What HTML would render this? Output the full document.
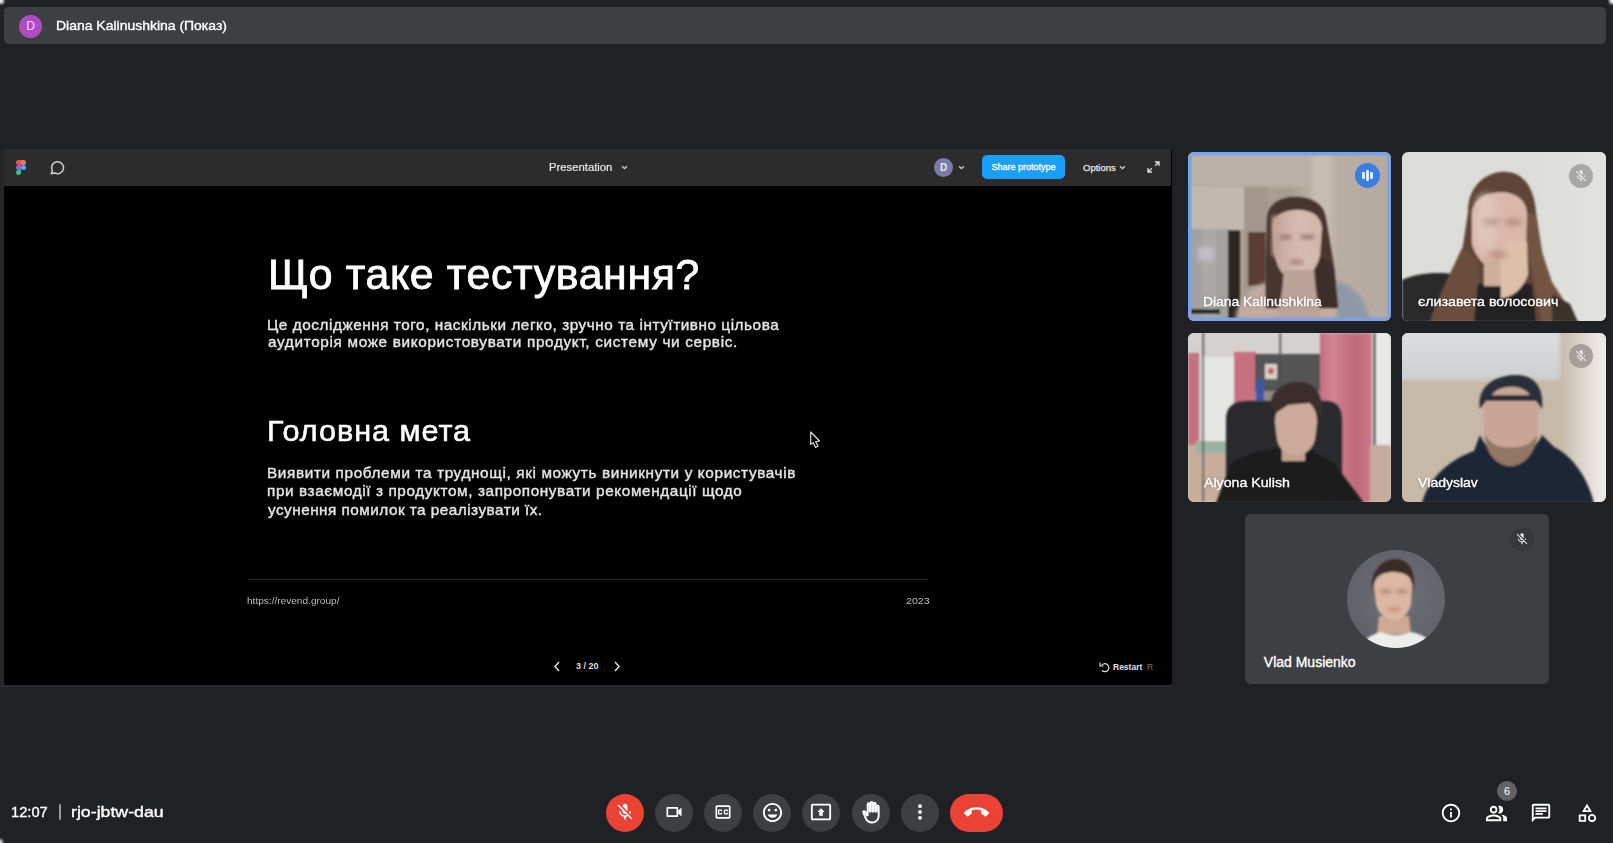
<!DOCTYPE html>
<html><head><meta charset="utf-8">
<style>
*{margin:0;padding:0;box-sizing:border-box}
html,body{width:1613px;height:843px;overflow:hidden;background:#202124;font-family:"Liberation Sans",sans-serif;position:relative}
.a{position:absolute}
svg{position:absolute;overflow:visible}
#topbar{left:4px;top:7px;width:1602px;height:37px;background:#3c4043;border-radius:5px}
#av{left:19px;top:15px;width:23px;height:23px;border-radius:50%;background:#b04bc6;color:#f6dcff;font-size:12px;text-align:center;line-height:23px}
#ttl{left:57px;top:17px;font-size:13px;letter-spacing:0.52px;color:#fff;white-space:nowrap}
#panel{left:4px;top:149px;width:1168px;height:536px;background:#000;border-radius:3px;overflow:hidden}
#tb{left:0;top:0;width:1167px;height:37px;background:#2c2c2c}
#h1{left:268px;top:251px;font-size:41px;letter-spacing:1.67px;white-space:nowrap;color:#fff}
#p1{left:267px;top:315px;font-size:14px;line-height:18.5px;color:#e6e6e6;white-space:nowrap}
#h2{left:267px;top:414px;font-size:29px;letter-spacing:2px;white-space:nowrap;color:#fff}
#p2{left:267px;top:465px;font-size:14px;line-height:18.5px;color:#e6e6e6;white-space:nowrap}
#hr{left:248px;top:579px;width:680px;height:1px;background:#262626}
.sl{position:absolute;line-height:1;white-space:nowrap;transform-origin:0 0}
.tx{color:#fff;-webkit-text-stroke:0.35px #fff}
.tn{text-shadow:0 0 3px rgba(0,0,0,.45)}
.sp{font-size:15px;color:#e4e4e4;-webkit-text-stroke:0.4px #e4e4e4}
.ft{font-size:9px;color:#bdbdbd;white-space:nowrap}
.tile{position:absolute;border-radius:6px;overflow:hidden}
.nm{position:absolute;font-size:13px;color:#fff;white-space:nowrap;text-shadow:0 0 2px rgba(0,0,0,.35)}
.btn{position:absolute;top:793.5px;width:38px;height:38px;border-radius:50%;background:#3c4043}
.b{position:absolute}
</style></head><body>
<div id="topbar" class="a"></div>
<div id="av" class="a">D</div>
<div class="sl tx" style="left:56px;top:18.5px;font-size:13px;transform:scaleX(1.074)">Diana Kalinushkina (Показ)</div>

<div class="a" style="left:0;top:150px;width:4px;height:536px;background:#252629"></div>
<div class="a" style="left:0;top:685px;width:1172px;height:1.5px;background:#2b2c2f"></div>
<div id="panel" class="a">
  <div id="tb" class="a"></div>
</div>

<!-- toolbar icons -->
<svg style="left:16px;top:160px" width="10" height="15" viewBox="0 0 10 15">
  <path d="M0 2.5A2.5 2.5 0 0 1 2.5 0H5v5H2.5A2.5 2.5 0 0 1 0 2.5z" fill="#e2584a"/>
  <path d="M5 0h2.5a2.5 2.5 0 0 1 0 5H5z" fill="#ec7070"/>
  <path d="M0 7.5A2.5 2.5 0 0 1 2.5 5H5v5H2.5A2.5 2.5 0 0 1 0 7.5z" fill="#9a5ce0"/>
  <circle cx="7.5" cy="7.5" r="2.5" fill="#44b4ec"/>
  <path d="M0 12.5A2.5 2.5 0 0 1 2.5 10H5v2.5a2.5 2.5 0 0 1-5 0z" fill="#34c486"/>
</svg>
<svg style="left:50px;top:160px" width="15" height="15" viewBox="0 0 15 15">
  <path d="M1.2 13.8l1.2-3.1A6 6 0 1 1 4.6 12.9z" fill="none" stroke="#cfcfcf" stroke-width="1.5" stroke-linejoin="round"/>
</svg>
<div class="a" style="left:549px;top:161px;font-size:11px;color:#e8e8e8;white-space:nowrap;transform:scaleX(1.026);transform-origin:0 0;-webkit-text-stroke:0.2px #e8e8e8">Presentation</div>
<svg style="left:621px;top:165px" width="7" height="5" viewBox="0 0 7 5"><path d="M1 1.2l2.5 2.3L6 1.2" fill="none" stroke="#c8c8c8" stroke-width="1.4"/></svg>
<div class="a" style="left:934px;top:158px;width:19px;height:19px;border-radius:50%;background:#7c7aa8;color:#e8e8f4;font-size:10px;line-height:19px;text-align:center;font-weight:bold">D</div>
<svg style="left:958px;top:165px" width="7" height="5" viewBox="0 0 7 5"><path d="M1 1.2l2.5 2.3L6 1.2" fill="none" stroke="#c8c8c8" stroke-width="1.4"/></svg>
<div class="a" style="left:982px;top:155px;width:83px;height:24px;border-radius:5px;background:#18a0fb;color:#fff;font-size:9px;line-height:24px;text-align:center;white-space:nowrap;-webkit-text-stroke:0.3px #fff">Share prototype</div>
<div class="a" style="left:1083px;top:162px;font-size:9.5px;color:#e8e8e8;white-space:nowrap;-webkit-text-stroke:0.25px #e8e8e8">Options</div>
<svg style="left:1119px;top:165px" width="7" height="5" viewBox="0 0 7 5"><path d="M1 1.2l2.5 2.3L6 1.2" fill="none" stroke="#c8c8c8" stroke-width="1.4"/></svg>
<svg style="left:1147px;top:161px" width="13" height="12" viewBox="0 0 13 12">
  <path d="M8 1h4v4M12 1L8.2 4.8M5 11H1V7M1 11l3.8-3.8" fill="none" stroke="#ddd" stroke-width="1.3"/>
</svg>

<div class="sl" style="left:267.5px;top:253.9px;font-size:42px;transform:scaleX(1.02);letter-spacing:0.608px;color:#fff;-webkit-text-stroke:0.8px #fff">Що таке тестування?</div>
<div class="sl sp" style="left:267px;top:316.5px;transform:scaleX(1.02);letter-spacing:0.541px">Це дослідження того, наскільки легко, зручно та інтуїтивно цільова</div>
<div class="sl sp" style="left:268px;top:334.3px;transform:scaleX(1.02);letter-spacing:0.66px">аудиторія може використовувати продукт, систему чи сервіс.</div>
<div class="sl" style="left:266.7px;top:415.7px;font-size:30px;transform:scaleX(1.02);letter-spacing:0.943px;color:#fff;-webkit-text-stroke:0.55px #fff">Головна мета</div>
<div class="sl sp" style="left:267px;top:465.2px;transform:scaleX(1.02);letter-spacing:0.625px">Виявити проблеми та труднощі, які можуть виникнути у користувачів</div>
<div class="sl sp" style="left:267px;top:483.1px;transform:scaleX(1.02);letter-spacing:0.598px">при взаємодії з продуктом, запропонувати рекомендації щодо</div>
<div class="sl sp" style="left:268px;top:501.5px;transform:scaleX(1.02);letter-spacing:0.473px">усунення помилок та реалізувати їх.</div>
<div id="hr" class="a"></div>
<div class="a ft" style="left:246.5px;top:596px;transform:scaleX(1.12);transform-origin:0 0">https://revend.group/</div>
<div class="a ft" style="left:905.5px;top:596px;transform:scaleX(1.18);transform-origin:0 0">2023</div>

<svg style="left:553px;top:661px" width="8" height="11" viewBox="0 0 8 11"><path d="M6 1L2 5.5 6 10" fill="none" stroke="#ddd" stroke-width="1.5"/></svg>
<div class="a ft" style="left:576px;top:661px;color:#ddd;font-weight:bold">3 / 20</div>
<svg style="left:613px;top:661px" width="8" height="11" viewBox="0 0 8 11"><path d="M2 1l4 4.5L2 10" fill="none" stroke="#ddd" stroke-width="1.5"/></svg>

<svg style="left:1099px;top:661px" width="11" height="12" viewBox="0 0 11 12">
  <path d="M2.5 4.5A4 4 0 1 1 3 9.5" fill="none" stroke="#ddd" stroke-width="1.2"/>
  <path d="M1 1.5v3.5h3.5" fill="none" stroke="#ddd" stroke-width="1.2"/>
</svg>
<div class="a" style="left:1113px;top:662px;font-size:8.5px;font-weight:bold;color:#e0e0e0;white-space:nowrap">Restart</div>
<div class="a" style="left:1147px;top:662px;font-size:8.5px;color:#777;white-space:nowrap">R</div>

<!-- cursor -->
<svg style="left:809px;top:430px" width="14" height="20" viewBox="0 0 14 20">
  <path d="M1.7 2v12.4l2.3-1.8 2.7 5 2.3-1.6-2.4-4.2 3.9-.8z" fill="#000" stroke="#e8e8e8" stroke-width="1.1" stroke-linejoin="round"/>
</svg>

<!-- tiles -->
<svg style="left:0;top:0" width="0" height="0"><defs>
<filter id="b1" x="-20%" y="-20%" width="140%" height="140%"><feGaussianBlur stdDeviation="1.2"/></filter>
<filter id="b2" x="-20%" y="-20%" width="140%" height="140%"><feGaussianBlur stdDeviation="2"/></filter>
<filter id="b3" x="-20%" y="-20%" width="140%" height="140%"><feGaussianBlur stdDeviation="3"/></filter>
<clipPath id="c1"><rect x="0" y="0" width="203" height="169" rx="6"/></clipPath>
<clipPath id="c2"><rect x="0" y="0" width="204" height="169" rx="6"/></clipPath>
<linearGradient id="g1" x1="0" x2="1" y1="0" y2="0"><stop offset="0" stop-color="#b9b1a8"/><stop offset=".28" stop-color="#aca197"/><stop offset=".5" stop-color="#a89c91"/><stop offset=".6" stop-color="#b8ada2"/><stop offset=".67" stop-color="#c6bbb0"/><stop offset=".74" stop-color="#b9aea3"/><stop offset="1" stop-color="#b4aa9f"/></linearGradient>
<linearGradient id="g4c" x1="0" x2="0" y1="0" y2="1"><stop offset="0" stop-color="#dde0e2"/><stop offset="1" stop-color="#cdd0d0"/></linearGradient>
<linearGradient id="g4r" x1="0" x2="1" y1="0" y2="0"><stop offset="0" stop-color="#c4b8a8"/><stop offset=".35" stop-color="#d8d0c6"/><stop offset=".8" stop-color="#ebe8e3"/><stop offset="1" stop-color="#efece8"/></linearGradient>
<linearGradient id="g3c" x1="0" x2="1" y1="0" y2="0"><stop offset="0" stop-color="#c46e7e"/><stop offset=".25" stop-color="#d28696"/><stop offset=".45" stop-color="#c87686"/><stop offset=".7" stop-color="#c06a7a"/><stop offset="1" stop-color="#ca7888"/></linearGradient>
<linearGradient id="gf1" x1="0" x2="1" y1="0" y2="0"><stop offset="0" stop-color="#c6a89c"/><stop offset=".55" stop-color="#d8bcb1"/><stop offset="1" stop-color="#d4b6aa"/></linearGradient>
<linearGradient id="g2b" x1="0" x2="1" y1="0" y2="0"><stop offset="0" stop-color="#dcddd9"/><stop offset="1" stop-color="#e2e3df"/></linearGradient>
<radialGradient id="gv" cx=".55" cy=".45" r=".6"><stop offset="0" stop-color="#6e6f76"/><stop offset="1" stop-color="#606168"/></radialGradient>
</defs></svg>

<!-- tile 1: Diana -->
<svg style="left:1188px;top:152px" width="203" height="169" viewBox="0 0 203 169">
 <g clip-path="url(#c1)">
  <rect width="203" height="169" fill="url(#g1)"/>
  <g filter="url(#b2)">
   <rect x="-5" y="-5" width="130" height="40" fill="#b9b1a8"/>
  </g>
  <g filter="url(#b1)">
   <rect x="3" y="35" width="54" height="43" fill="#c1b9af"/>
   <rect x="56" y="35" width="24" height="135" fill="#a4988e"/>
   <rect x="2" y="77" width="40" height="92" fill="#a3a2a1"/>
   <rect x="14" y="77" width="14" height="92" fill="#aaa9a8"/>
   <rect x="40" y="78" width="12" height="92" fill="#2e2824"/>
   <rect x="2" y="157" width="30" height="5" fill="#2a2a2a"/>
   <rect x="60" y="80" width="18" height="54" fill="#5a3e30"/>
  </g>
  <g filter="url(#b2)">
   <rect x="10" y="95" width="16" height="14" fill="#c0bcc8"/>
   <rect x="124" y="0" width="18" height="169" fill="#c8bdb1"/>
   <path d="M47 170C50 140 70 128 100 127L150 128C170 132 180 145 182 170Z" fill="#c2ab9e"/>
   <path d="M146 129C166 132 178 145 182 170L150 170Z" fill="#8e98a6"/>
  </g>
  <g filter="url(#b1)">
   <path d="M79 66C80 50 96 44 108 45C124 45 136 52 138 66L146 114L150 156L128 156L124 126L96 126L92 156L78 156L77 114Z" fill="#47352f"/>
   <path d="M128 100L146 114L150 156L130 156Z" fill="#3e2e29"/>
   <path d="M85 76C86 60 100 58 110 58C124 58 133 64 134 76L132 104C128 120 118 127 108 127C98 127 90 120 87 104Z" fill="url(#gf1)"/>
      <path d="M96 118L126 118L128 140L134 170L88 170L94 140Z" fill="#bba398"/>
  </g>
  <g filter="url(#b2)">
   <rect x="90" y="83" width="13" height="4" fill="#8f716a"/>
   <rect x="113" y="83" width="13" height="4" fill="#8f716a"/>
   <rect x="102" y="108" width="13" height="4" fill="#a27a72"/>
   <rect x="84" y="64" width="8" height="40" fill="#c4a59a"/>
  </g>
 </g>
 <rect x="1.75" y="1.75" width="199.5" height="165.5" rx="5" fill="none" stroke="#7ba2e6" stroke-width="3.5"/>
</svg>
<svg style="left:1355px;top:163px" width="25" height="25" viewBox="0 0 25 25"><circle cx="12.5" cy="12.5" r="12.5" fill="#3a7ee4"/><rect x="7.2" y="9" width="2.6" height="7" rx="1.3" fill="#fff"/><rect x="11.2" y="7" width="2.6" height="11" rx="1.3" fill="#fff"/><rect x="15.2" y="9" width="2.6" height="7" rx="1.3" fill="#fff"/></svg>

<!-- tile 2: Elizaveta -->
<svg style="left:1402px;top:152px" width="204" height="169" viewBox="0 0 204 169">
 <g clip-path="url(#c2)">
  <rect width="204" height="169" fill="#dcddd9"/>
  <rect x="120" width="84" height="169" fill="url(#g2b)"/>
  <g filter="url(#b1)">
   <path d="M66 60C66 28 92 18 104 20C120 20 132 34 134 60L140 100L148 130L176 170L26 170L50 128L60 100Z" fill="#5f4537"/>
   <path d="M120 60L134 62L140 100L150 130L176 170L140 170L128 110Z" fill="#725443"/>
   <path d="M60 100L68 110L62 170L26 170L50 128Z" fill="#6e5242"/>
   <path d="M0 128C16 120 48 118 64 126L60 170L0 170Z" fill="#2b2a29"/>
   <path d="M60 96L76 108L80 170L28 170C34 150 46 126 60 96Z" fill="#6a4d3c"/>
   <path d="M76 132L130 132L134 170L72 170Z" fill="#222120"/>
   <path d="M150 142L168 152L176 170L150 170Z" fill="#3a302a"/>
   <path d="M70 62C70 36 124 30 125 62L124 96C118 115 102 121 96 120C82 116 72 102 70 92Z" fill="#d9b8aa"/>
   <rect x="82" y="108" width="26" height="26" fill="#cfae9c"/>
   <path d="M99 146L98 102C100 90 110 86 125 90L126 122C122 136 110 146 99 146Z" fill="#dcc0aa"/>
  </g>
  <g filter="url(#b3)">
   <rect x="74" y="42" width="20" height="56" rx="10" fill="#dfc6b8"/>
   <rect x="82" y="68" width="15" height="4" fill="#9a7868"/>
   <rect x="104" y="68" width="15" height="4" fill="#9a7868"/>
   <rect x="88" y="100" width="16" height="5" fill="#b47c72"/>
  </g>
 </g>
</svg>
<svg style="left:1569px;top:164px" width="24" height="24" viewBox="0 0 24 24"><circle cx="12" cy="12" r="12" fill="#a8a8a6"/><g transform="translate(5 5) scale(0.58)" fill="#eee"><path d="M19 11h-1.7c0 .74-.16 1.43-.43 2.05l1.23 1.23c.56-.98.9-2.09.9-3.28zm-4.02.17c0-.06.02-.11.02-.17V5c0-1.66-1.34-3-3-3S9 3.34 9 5v.18l5.98 5.99zM4.27 3L3 4.27l6.01 6.01V11c0 1.66 1.33 3 2.99 3 .22 0 .44-.03.65-.08l1.66 1.66c-.71.33-1.5.52-2.31.52-2.76 0-5.3-2.1-5.3-5.1H5c0 3.41 2.72 6.23 6 6.72V21h2v-3.28c.91-.13 1.77-.45 2.54-.9L19.73 21 21 19.73 4.27 3z"/></g></svg>

<!-- tile 3: Alyona -->
<svg style="left:1188px;top:333px" width="203" height="169" viewBox="0 0 203 169">
 <g clip-path="url(#c1)">
  <rect width="203" height="169" fill="#d6d2ce"/>
  <rect width="203" height="22" fill="#d4d1ce"/>
  <g filter="url(#b1)">
   <rect x="0" y="20" width="11" height="92" fill="#c47282"/>
   <rect x="14" y="24" width="34" height="90" fill="#e6e6e4"/>
   <rect x="46" y="19" width="22" height="54" fill="#c67080"/>
   <rect x="67" y="21" width="66" height="40" fill="#545456"/>
   <rect x="67" y="58" width="66" height="14" fill="#8e8a86"/>
   <rect x="77" y="31" width="12" height="15" fill="#d8d0cc"/>
   <circle cx="83" cy="38" r="3" fill="#c85a50"/>
   <rect x="68" y="47" width="8" height="22" fill="#3a58a8"/>
   <rect x="132" y="0" width="52" height="169" fill="url(#g3c)"/>
   <rect x="184" y="0" width="19" height="115" fill="#e8e8e6"/>
   <rect x="185" y="0" width="3" height="115" fill="#606060"/>
   <rect x="182" y="112" width="21" height="57" fill="#c4ab9c"/>
   <rect x="0" y="112" width="40" height="57" fill="#c6ad9c"/>
   <rect x="8" y="108" width="32" height="12" fill="#9ab2a2"/>
   <rect x="14.5" y="0" width="1.6" height="169" fill="#505050"/>
   <rect x="91.5" y="0" width="1.6" height="60" fill="#505050"/>
  </g>
  <g filter="url(#b1)">
   <path d="M38 169L38 86C38 72 48 68 60 68L138 68C150 68 154 76 154 88L154 169Z" fill="#2c2c2e"/>
   <path d="M28 170L43 130L66 119L90 115L122 117L146 130L176 170Z" fill="#1e1e1f"/>
   <rect x="94" y="108" width="23" height="20" fill="#c0a090"/>
   <path d="M87 90C87 72 98 66 108 66C120 66 129 72 129 90L127 106C124 118 116 122 108 122C99 122 91 117 89 106Z" fill="#ccab9c"/>
   <path d="M83 70C84 54 100 48 112 49C128 50 135 60 134 84L128 78L122 70L100 72L88 80Z" fill="#3a2e2a"/>
  </g>
 </g>
</svg>

<!-- tile 4: Vladyslav -->
<svg style="left:1402px;top:333px" width="204" height="169" viewBox="0 0 204 169">
 <g clip-path="url(#c2)">
  <rect width="204" height="169" fill="#c6b9a7"/>
  <g filter="url(#b2)">
   <rect x="-5" y="-5" width="214" height="52" fill="url(#g4c)"/>
   <rect x="158" y="-5" width="50" height="180" fill="url(#g4r)"/>
  </g>
  <g filter="url(#b1)">
   <path d="M20 170C28 142 50 126 72 118L78 102C86 126 130 128 140 102L152 114C172 124 186 146 192 170Z" fill="#1f2534"/>
   <path d="M81 64L137 64L136 98C134 118 122 132 108 133C94 132 84 120 82 100Z" fill="#c9a595"/>
   <path d="M82 102C86 122 96 133 108 133C120 133 132 124 136 102L128 110C118 116 98 116 90 110Z" fill="#927666"/>
   <path d="M78 76C74 50 98 42 114 42C134 42 142 56 140 76L134 68L84 68Z" fill="#2a2e38"/>
   <path d="M90 62C96 52 120 50 128 62Z" fill="#c4a696"/>
  </g>
 </g>
</svg>
<svg style="left:1569px;top:344px" width="24" height="24" viewBox="0 0 24 24"><circle cx="12" cy="12" r="12" fill="#a09a92" fill-opacity=".9"/><g transform="translate(5 5) scale(0.58)" fill="#eee"><path d="M19 11h-1.7c0 .74-.16 1.43-.43 2.05l1.23 1.23c.56-.98.9-2.09.9-3.28zm-4.02.17c0-.06.02-.11.02-.17V5c0-1.66-1.34-3-3-3S9 3.34 9 5v.18l5.98 5.99zM4.27 3L3 4.27l6.01 6.01V11c0 1.66 1.33 3 2.99 3 .22 0 .44-.03.65-.08l1.66 1.66c-.71.33-1.5.52-2.31.52-2.76 0-5.3-2.1-5.3-5.1H5c0 3.41 2.72 6.23 6 6.72V21h2v-3.28c.91-.13 1.77-.45 2.54-.9L19.73 21 21 19.73 4.27 3z"/></g></svg>

<!-- tile 5: Vlad Musienko -->
<div class="tile" style="left:1245px;top:514px;width:304px;height:170px;background:#3c4043"></div>
<svg style="left:1347px;top:550px" width="98" height="98" viewBox="0 0 98 98">
 <defs><clipPath id="cv"><circle cx="49" cy="49" r="49"/></clipPath></defs>
 <g clip-path="url(#cv)">
  <rect width="98" height="98" fill="url(#gv)"/>
  <g filter="url(#b1)">
   <path d="M32 66L62 66L64 84L30 84Z" fill="#cfa892"/>
   <path d="M12 100C16 88 26 84 34 82C42 86 56 86 64 82C74 84 84 88 88 100Z" fill="#ededeb"/>
   <path d="M27 36C27 18 66 16 65 36L64 54C62 64 54 70 47 70C40 70 31 64 29 54Z" fill="#dcb7a2"/>
   <path d="M25 40C23 18 38 9 48 9C60 9 69 18 67 40L63 28C58 20 34 20 29 28Z" fill="#3a2b25"/>
  </g>
  <g filter="url(#b2)">
   <rect x="34" y="40" width="10" height="3" fill="#9c7868"/>
   <rect x="50" y="40" width="10" height="3" fill="#9c7868"/>
   <rect x="41" y="58" width="12" height="3" fill="#b88070"/>
  </g>
 </g>
</svg>
<svg style="left:1510px;top:527px" width="24" height="24" viewBox="0 0 24 24"><circle cx="12" cy="12" r="12" fill="#36393c"/><g transform="translate(5 5) scale(0.58)" fill="#e8eaed"><path d="M19 11h-1.7c0 .74-.16 1.43-.43 2.05l1.23 1.23c.56-.98.9-2.09.9-3.28zm-4.02.17c0-.06.02-.11.02-.17V5c0-1.66-1.34-3-3-3S9 3.34 9 5v.18l5.98 5.99zM4.27 3L3 4.27l6.01 6.01V11c0 1.66 1.33 3 2.99 3 .22 0 .44-.03.65-.08l1.66 1.66c-.71.33-1.5.52-2.31.52-2.76 0-5.3-2.1-5.3-5.1H5c0 3.41 2.72 6.23 6 6.72V21h2v-3.28c.91-.13 1.77-.45 2.54-.9L19.73 21 21 19.73 4.27 3z"/></g></svg>

<div class="sl tx tn" style="left:1202.7px;top:294.8px;font-size:13px;transform:scaleX(1.067)">Diana Kalinushkina</div>
<div class="sl tx tn" style="left:1417.9px;top:295.3px;font-size:13px;transform:scaleX(1.094)">єлизавета волосович</div>
<div class="sl tx tn" style="left:1203.7px;top:475.8px;font-size:13px;transform:scaleX(1.09)">Alyona Kulish</div>
<div class="sl tx tn" style="left:1417.6px;top:475.8px;font-size:13px;transform:scaleX(1.076)">Vladyslav</div>
<div class="sl tx" style="left:1263.8px;top:655.2px;font-size:14px">Vlad Musienko</div>

<!-- bottom -->
<div class="sl tx" style="left:10.9px;top:803.8px;font-size:15px;transform:scaleX(0.98)">12:07</div>
<div class="a" style="left:59px;top:804px;width:2px;height:16px;background:#9a9a9a;border-radius:1px"></div>
<div class="sl tx" style="left:71px;top:804.3px;font-size:15px;transform:scaleX(1.183)">rjo-jbtw-dau</div>

<div class="btn" style="left:606px;background:#ea4335"></div>
<svg style="left:615px;top:802px" width="20" height="20" viewBox="0 0 24 24"><path fill="#fff" d="M19 11h-1.7c0 .74-.16 1.43-.43 2.05l1.23 1.23c.56-.98.9-2.09.9-3.28zm-4.02.17c0-.06.02-.11.02-.17V5c0-1.66-1.34-3-3-3S9 3.34 9 5v.18l5.98 5.99zM4.27 3L3 4.27l6.01 6.01V11c0 1.66 1.33 3 2.99 3 .22 0 .44-.03.65-.08l1.66 1.66c-.71.33-1.5.52-2.31.52-2.76 0-5.3-2.1-5.3-5.1H5c0 3.41 2.72 6.23 6 6.72V21h2v-3.28c.91-.13 1.77-.45 2.54-.9L19.730 21 21 19.73 4.27 3z"/></svg>
<div class="btn" style="left:655px"></div>
<svg style="left:664px;top:802px" width="20" height="20" viewBox="0 0 24 24"><path fill="#fff" d="M15 8v8H5V8h10m1-2H4c-.55 0-1 .45-1 1v10c0 .55.45 1 1 1h12c.55 0 1-.45 1-1v-3.5l4 4v-11l-4 4V7c0-.55-.45-1-1-1z"/></svg>
<div class="btn" style="left:704px"></div>
<svg style="left:713px;top:802px" width="20" height="20" viewBox="0 0 24 24"><path fill="#fff" d="M19 4H5c-1.11 0-2 .9-2 2v12c0 1.1.89 2 2 2h14c1.1 0 2-.9 2-2V6c0-1.1-.9-2-2-2zm0 14H5V6h14v12zM7 15h3c.55 0 1-.45 1-1v-1H9.5v.5h-2v-3h2v.5H11v-1c0-.55-.45-1-1-1H7c-.55 0-1 .45-1 1v4c0 .55.45 1 1 1zm7 0h3c.55 0 1-.45 1-1v-1h-1.5v.5h-2v-3h2v.5H18v-1c0-.55-.45-1-1-1h-3c-.55 0-1 .45-1 1v4c0 .55.45 1 1 1z"/></svg>
<div class="btn" style="left:753px"></div>
<svg style="left:760.5px;top:801px" width="23" height="23" viewBox="0 0 24 24"><path fill="#fff" d="M11.99 2C6.47 2 2 6.48 2 12s4.47 10 9.99 10C17.52 22 22 17.52 22 12S17.52 2 11.99 2zM12 20c-4.42 0-8-3.58-8-8s3.58-8 8-8 8 3.58 8 8-3.58 8-8 8zm3.5-9c.83 0 1.5-.67 1.5-1.5S16.33 8 15.5 8 14 8.67 14 9.5s.67 1.5 1.5 1.5zm-7 0c.83 0 1.5-.67 1.5-1.5S9.33 8 8.5 8 7 8.67 7 9.5 7.67 11 8.5 11zm3.5 6.5c2.33 0 4.31-1.46 5.11-3.5H6.89c.8 2.04 2.78 3.5 5.11 3.5z"/></svg>
<div class="btn" style="left:802px"></div>
<svg style="left:810px;top:801px" width="22" height="22" viewBox="0 0 24 24"><path fill="#fff" d="M21 3H3c-1.11 0-2 .89-2 2v14c0 1.11.89 2 2 2h18c1.11 0 2-.89 2-2V5c0-1.11-.89-2-2-2zm0 16.02H3V4.98h18v14.04zM10 12H8l4-4 4 4h-2v4h-4v-4z"/></svg>
<div class="btn" style="left:852px"></div>
<svg style="left:859.5px;top:800.5px" width="23" height="23" viewBox="0 0 24 24"><path fill="none" stroke="#fff" stroke-width="2" stroke-linejoin="round" d="M12.6 22.5c-3 0-5.6-1.8-6.7-4.6L3.4 11.6c-.2-.6.3-1.2.9-1l.5.2c.5.2.9.5 1.1 1L7.2 15H8V3.6c0-.7.5-1.2 1.1-1.2s1.1.5 1.1 1.2V11h.9V2.2c0-.7.5-1.2 1.1-1.2s1.1.5 1.1 1.2V11h.9V3.2c0-.7.5-1.2 1.1-1.2s1.1.5 1.1 1.2V11h.9V6c0-.7.5-1.2 1.1-1.2s1.1.5 1.1 1.2v9.5c0 3.9-3.1 7-7 7z"/></svg>
<div class="btn" style="left:901px"></div>
<svg style="left:910px;top:802px" width="20" height="20" viewBox="0 0 24 24"><circle cx="12" cy="5" r="2.3" fill="#fff"/><circle cx="12" cy="12" r="2.3" fill="#fff"/><circle cx="12" cy="19" r="2.3" fill="#fff"/></svg>
<div class="btn" style="left:950px;width:53px;border-radius:19px;background:#ea4335"></div>
<svg style="left:964px;top:800px" width="25" height="25" viewBox="0 0 24 24"><path fill="#fff" d="M12 9c-1.6 0-3.15.25-4.6.72v3.1c0 .39-.23.74-.56.9-.98.49-1.87 1.12-2.66 1.85-.18.18-.43.28-.7.28-.28 0-.53-.11-.71-.29L.29 13.08c-.18-.17-.29-.42-.29-.7 0-.28.11-.53.29-.71C3.34 8.78 7.46 7 12 7s8.66 1.78 11.71 4.67c.18.18.29.43.29.71 0 .28-.11.53-.29.71l-2.48 2.48c-.18.18-.43.29-.71.29-.27 0-.52-.11-.7-.28-.79-.74-1.69-1.36-2.67-1.85-.33-.16-.56-.5-.56-.9v-3.1C15.15 9.25 13.6 9 12 9z"/></svg>

<!-- right icons -->
<svg style="left:1440px;top:802px" width="22" height="22" viewBox="0 0 24 24"><path fill="#fff" d="M11 7h2v2h-2zm0 4h2v6h-2zm1-9C6.48 2 2 6.48 2 12s4.48 10 10 10 10-4.48 10-10S17.52 2 12 2zm0 18c-4.41 0-8-3.59-8-8s3.59-8 8-8 8 3.59 8 8-3.59 8-8 8z"/></svg>
<div class="a" style="left:1497px;top:781px;width:20px;height:20px;border-radius:50%;background:#5f6368;color:#fff;font-size:11px;line-height:20px;text-align:center">6</div>
<svg style="left:1484.5px;top:802px" width="23" height="23" viewBox="0 0 24 24"><path fill="#fff" d="M16.67 13.13C18.04 14.06 19 15.32 19 17v3h4v-3c0-2.18-3.57-3.47-6.33-3.870zM15 12c2.21 0 4-1.79 4-4s-1.79-4-4-4c-.47 0-.91.1-1.33.24C14.5 5.27 15 6.58 15 8s-.5 2.73-1.33 3.76c.42.14.86.24 1.33.24zm-6 0c2.21 0 4-1.79 4-4s-1.79-4-4-4-4 1.79-4 4 1.79 4 4 4zm0-6c1.1 0 2 .9 2 2s-.9 2-2 2-2-.9-2-2 .9-2 2-2zm0 7c-2.67 0-8 1.34-8 4v3h16v-3c0-2.66-5.33-4-8-4zm6 5H3v-.99C3.2 16.29 6.3 15 9 15s5.8 1.29 6 2v1z"/></svg>
<svg style="left:1530px;top:802px" width="22" height="22" viewBox="0 0 24 24"><path fill="#fff" d="M20 2H4c-1.1 0-2 .9-2 2v18l4-4h14c1.1 0 2-.9 2-2V4c0-1.1-.9-2-2-2zm0 14H5.17L4 17.17V4h16v12zM6 12h8v2H6zm0-3h12v2H6zm0-3h12v2H6z"/></svg>
<svg style="left:1576px;top:802px" width="22" height="22" viewBox="0 0 24 24"><path fill="#fff" d="M12 2l-5.5 9h11L12 2zm0 3.84L13.93 9h-3.87L12 5.84zM17.5 13c-2.49 0-4.5 2.01-4.5 4.5s2.01 4.5 4.5 4.5 4.5-2.01 4.5-4.5-2.01-4.5-4.5-4.5zm0 7c-1.38 0-2.5-1.12-2.5-2.5s1.12-2.5 2.5-2.5 2.5 1.12 2.5 2.5-1.12 2.5-2.5 2.5zM3 21.5h8v-8H3v8zm2-6h4v4H5v-4z"/></svg>
<div class="a" style="left:-2.5px;top:-2.5px;width:6px;height:6px;border-radius:50%;background:#e8e8e8;filter:blur(.8px)"></div>
<div class="a" style="left:1609px;top:-3px;width:7px;height:7px;border-radius:50%;background:#e8e8e8;filter:blur(1px)"></div>
<div class="a" style="left:-3px;top:839px;width:6px;height:7px;border-radius:50%;background:#c8c8c8;filter:blur(1px)"></div>
</body></html>
